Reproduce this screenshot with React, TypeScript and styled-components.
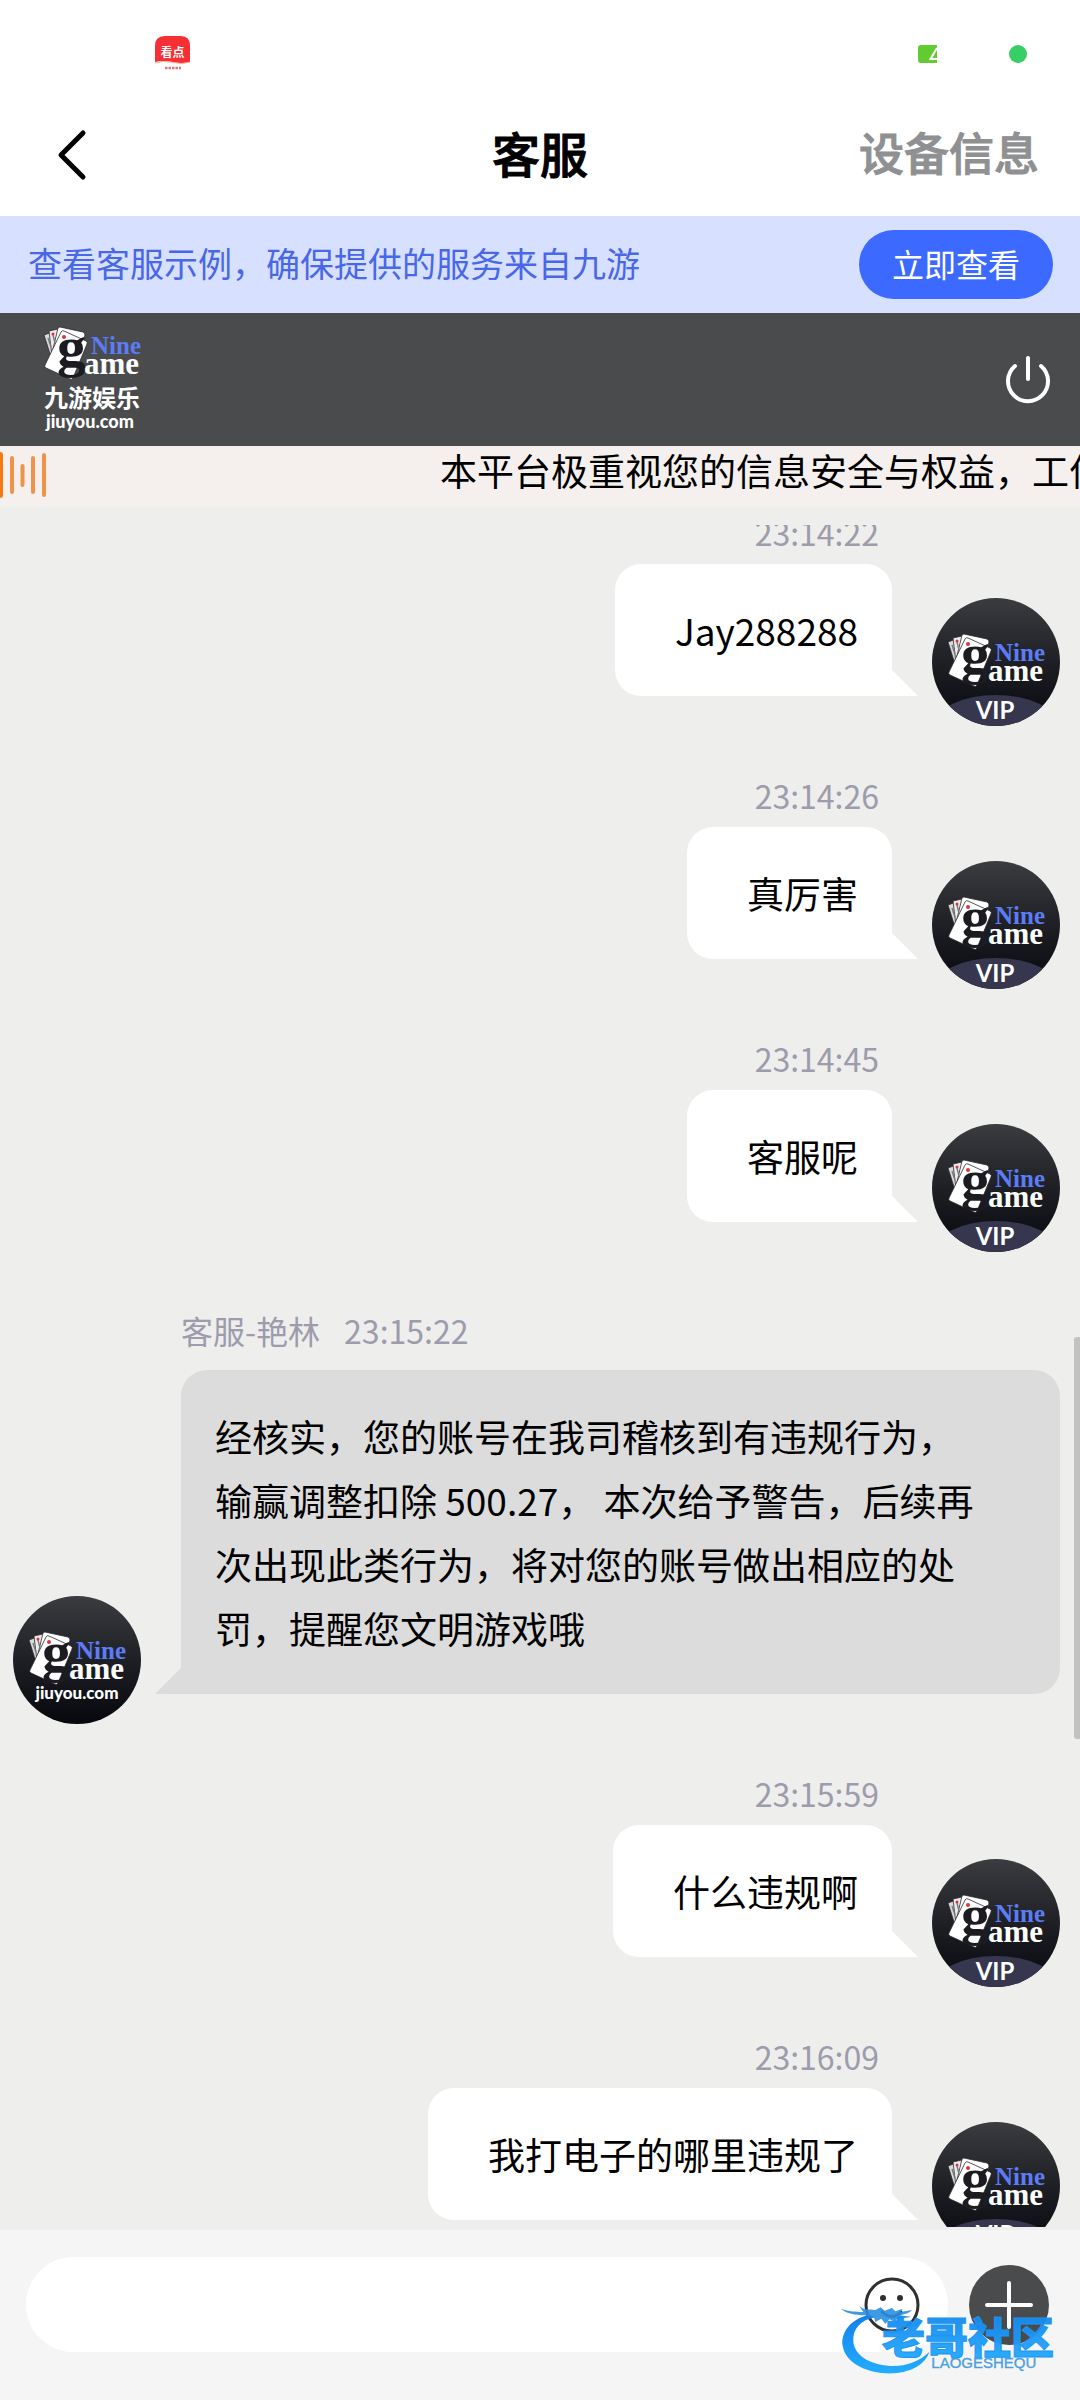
import React, { useLayoutEffect, useRef } from "react";
import styled, { createGlobalStyle } from "styled-components";

const GlobalStyle = createGlobalStyle`
  * { box-sizing: border-box; }
  body {
    margin: 0;
    background: #eeeeec;
    font-family: "Noto Sans CJK SC", "Noto Sans", sans-serif;
    color: #000;
  }
  button, input { font: inherit; color: inherit; }
  button { padding: 0; border: 0; background: none; cursor: pointer; }
  svg { display: block; }
`;

const Page = styled.div`
  position: relative;
  display: flex;
  flex-direction: column;
  height: 100vh;
  overflow: hidden;
`;

const StatusBar = styled.div`
  flex: none;
  display: flex;
  align-items: center;
  justify-content: space-between;
  height: 94px;
  padding: 14px 53px 0 155px;
  background: #fff;
`;

const StatusGroup = styled.div`
  display: flex;
  align-items: center;
  gap: 72px;
`;

const RecordingDot = styled.span`
  width: 18px;
  height: 18px;
  border-radius: 50%;
  background: #35cf66;
`;

const NavBar = styled.header`
  flex: none;
  display: grid;
  grid-template-columns: 1fr auto 1fr;
  align-items: center;
  height: 122px;
  padding: 0 41px 6px;
  background: #fff;
`;

const BackButton = styled.button`
  justify-self: start;
  padding: 6px 14px 0;
`;

const Title = styled.h1`
  margin: 0;
  font-size: 48px;
  line-height: 64px;
  font-weight: 500;
  -webkit-text-stroke: 1px currentColor;
`;

const DeviceButton = styled.button`
  justify-self: end;
  font-size: 45px;
  line-height: 64px;
  font-weight: 500;
  color: #8f9092;
  -webkit-text-stroke: 1px currentColor;
`;

const VerifyBanner = styled.section`
  flex: none;
  display: flex;
  align-items: center;
  justify-content: space-between;
  height: 97px;
  padding: 0 27px 0 28px;
  background: #d8e0ff;
`;

const BannerText = styled.p`
  margin: 0;
  padding-bottom: 4px;
  font-size: 34px;
  line-height: 48px;
  color: #4868e8;
`;

const BannerButton = styled.button`
  height: 69px;
  padding: 0 33px 4px;
  border-radius: 35px;
  background: #3c69ff;
  color: #fff;
  font-size: 32px;
  line-height: 48px;
`;

const BrandBar = styled.section`
  flex: none;
  display: flex;
  align-items: center;
  justify-content: space-between;
  height: 133px;
  padding: 0 28px 0 43px;
  background: #4a4b4c;
`;

const Notice = styled.section`
  flex: none;
  display: flex;
  height: 60px;
  overflow: hidden;
  background: #f5f0ee;
`;

const NoticeIcon = styled.div`
  flex: none;
  padding-top: 6px;
`;

const NoticeText = styled.p`
  flex: 1;
  margin: 0;
  padding-left: 392px;
  overflow: hidden;
  white-space: nowrap;
  font-size: 37px;
  line-height: 48px;
`;

const Chat = styled.main`
  position: relative;
  flex: 1;
  display: flex;
  min-height: 0;
  padding: 19px 0 3px;
`;

const Scroller = styled.div`
  flex: 1;
  overflow-y: auto;
  scrollbar-width: none;
`;

const ScrollThumb = styled.div`
  position: absolute;
  top: 48.2%;
  right: 0;
  width: 6px;
  height: 23.3%;
  border-radius: 3px 0 0 3px;
  background: #c2c2c1;
`;

const Message = styled.article<{ $mine: boolean }>`
  display: grid;
  grid-template-columns: ${(p) => (p.$mine ? "1fr 128px" : "128px 1fr")};
  column-gap: 40px;
  align-items: end;
  justify-items: ${(p) => (p.$mine ? "end" : "stretch")};
  padding: ${(p) => (p.$mine ? "0" : "9px")} 20px 45px 13px;
`;

const Meta = styled.div<{ $mine: boolean }>`
  grid-row: 1;
  grid-column: ${(p) => (p.$mine ? 1 : 2)};
  display: flex;
  gap: 24px;
  margin-bottom: ${(p) => (p.$mine ? "8px" : "16px")};
  padding-right: 13px;
  font-size: 32px;
  line-height: 48px;
  color: #9d9bac;
`;

const Bubble = styled.p<{ $mine: boolean }>`
  position: relative;
  grid-row: 2;
  grid-column: ${(p) => (p.$mine ? 1 : 2)};
  margin: 0 0 30px;
  padding: ${(p) => (p.$mine ? "34px 34px 34px 60px" : "34px 72px 34px 34px")};
  border-radius: ${(p) => (p.$mine ? "26px 26px 0 26px" : "26px 26px 26px 0")};
  background: ${(p) => (p.$mine ? "#fff" : "#dcdcdc")};
  font-size: 37px;
  line-height: 64px;

  &::after {
    content: "";
    position: absolute;
    bottom: 0;
    ${(p) => (p.$mine ? "left: 100%" : "right: 100%")};
    width: 26px;
    height: 26px;
    background: inherit;
    clip-path: ${(p) =>
      p.$mine ? "polygon(0 0, 100% 100%, 0 100%)" : "polygon(100% 0, 100% 100%, 0 100%)"};
  }
`;

const AvatarSlot = styled.div<{ $mine: boolean }>`
  grid-row: 2;
  grid-column: ${(p) => (p.$mine ? 2 : 1)};
`;

const Composer = styled.form`
  flex: none;
  display: flex;
  align-items: center;
  gap: 21px;
  padding: 27px 31px 48px 26px;
  background: #f5f5f5;
`;

const Field = styled.div`
  flex: 1;
  display: flex;
  align-items: center;
  height: 95px;
  padding: 0 28px 0 40px;
  border-radius: 48px;
  background: #fff;
`;

const TextInput = styled.input`
  flex: 1;
  min-width: 0;
  height: 64px;
  border: 0;
  outline: none;
  background: transparent;
  font-size: 37px;
`;

const AddButton = styled.button`
  display: grid;
  place-items: center;
  width: 80px;
  height: 80px;
  border-radius: 50%;
  background: #4a4b4c;
`;

const Watermark = styled.div`
  position: absolute;
  right: 16px;
  bottom: 24px;
  pointer-events: none;
`;

const SERIF = '"Liberation Serif", serif';
const SANS = "Lato, sans-serif";

function BrandMark() {
  return (
    <g>
      <g stroke="#2a2a2e" strokeWidth="0.8" strokeLinejoin="round">
        <path d="M16 44 l8 -3 9 22 -10 3z" fill="#d9d9db" />
        <path d="M21 40 l9 -2 7 24 -13 3z" fill="#ebebed" />
        <path d="M30 37 q1 -1 2 -1 l23 5 q2 1 2 3 l-4 16 -28 -2z" fill="#fff" />
        <path d="M33 41 q1 -2 3 -1 l22 10 q2 1 1 3 l-14 34 q-1 2 -3 1 l-24 -11 q-2 -1 -1 -3z" fill="#fff" />
      </g>
      <path d="M20 47 l3 9 M25 44 l2 8" stroke="#777" strokeWidth="1.4" />
      <circle cx="25" cy="43" r="1.500" fill="#d8363a" />
      <circle cx="36" cy="46" r="2" fill="#d8363a" />
      <text x="29" y="75" fontFamily={SERIF} fontWeight="700" fontSize="58" fill="#1b1b20">g</text>
      <text x="63" y="63" fontFamily={SERIF} fontWeight="700" fontSize="25" fill="#5b7cf5">Nine</text>
      <text x="56" y="83" fontFamily={SERIF} fontWeight="700" fontSize="31" fill="#fff">ame</text>
    </g>
  );
}

function BrandLogo() {
  return (
    <svg width="98" height="110" viewBox="0 0 98 110" role="img" aria-label="九游娱乐">
      <g transform="translate(-15 -34)">
        <BrandMark />
      </g>
      <text x="1" y="82" fontFamily='"Noto Sans CJK SC", sans-serif' fontWeight="700" fontSize="24" fill="#fff">九游娱乐</text>
      <text x="3" y="103" fontFamily={SANS} fontWeight="900" fontSize="18" fill="#fff">jiuyou.com</text>
    </svg>
  );
}

function Avatar({ vip, id }: { vip: boolean; id: string }) {
  return (
    <svg width="128" height="128" viewBox="0 0 128 128" role="img" aria-label={vip ? "VIP" : "客服"}>
      <defs>
        <linearGradient id={`${id}-bg`} x1="0" y1="0" x2="0" y2="1">
          <stop offset="0" stopColor="#3b3c40" />
          <stop offset="0.55" stopColor="#1c1d22" />
          <stop offset="1" stopColor="#07080e" />
        </linearGradient>
        <clipPath id={`${id}-clip`}>
          <circle cx="64" cy="64" r="64" />
        </clipPath>
      </defs>
      <g clipPath={`url(#${id}-clip)`}>
        <rect width="128" height="128" fill={`url(#${id}-bg)`} />
        {vip && <ellipse cx="64" cy="128" rx="62" ry="31" fill="#37364f" />}
      </g>
      <BrandMark />
      {vip ? (
        <text x="63" y="121" textAnchor="middle" fontFamily={SANS} fontWeight="700" fontSize="24" fill="#fff">VIP</text>
      ) : (
        <text x="64" y="103" textAnchor="middle" fontFamily={SANS} fontWeight="900" fontSize="17" fill="#fff">jiuyou.com</text>
      )}
    </svg>
  );
}

function NewsIcon() {
  return (
    <svg width="36" height="36" viewBox="0 0 36 36" role="img" aria-label="看点">
      <path d="M0 10 Q0 0 10 0 H26 Q35 0 35 10 V26 Q27 28 18 26 Q8 24 0 26z" fill="#f52f33" />
      <path d="M0 27 Q8 24 18 26.500 Q27 29 35 26" fill="none" stroke="#f9a08a" strokeWidth="0.8" />
      <text x="17.500" y="21" textAnchor="middle" fontFamily='"Noto Sans CJK SC", sans-serif' fontWeight="700" fontSize="12" fill="#fff">看点</text>
      <path d="M10 32 H26" stroke="#d9777a" strokeWidth="2.500" strokeDasharray="2.500 1" />
    </svg>
  );
}

function NetworkBadge() {
  return (
    <svg width="19" height="18" viewBox="0 0 19 18" aria-hidden="true">
      <path d="M3 0 H19 V18 H3 Q0 18 0 15 V3 Q0 0 3 0z" fill="#62cb31" />
      <path d="M19 3 L12.500 14 H19" fill="none" stroke="#fff" strokeWidth="2" />
    </svg>
  );
}

function WatermarkLogo() {
  return (
    <svg width="224" height="72" viewBox="34 192 672 216" role="img" aria-label="老哥社区">
      <defs>
        <linearGradient id="wm" x1="0" y1="0" x2="0" y2="1">
          <stop offset="0" stopColor="#1380ea" />
          <stop offset="1" stopColor="#22adff" />
        </linearGradient>
      </defs>
      <path
        d="M122 224 C60 238 36 282 42 318 C52 376 130 404 196 400 C250 396 290 372 302 336 C270 366 230 380 184 378 C120 374 76 344 74 304 C72 266 96 240 140 232z"
        fill="url(#wm)"
      />
      <path
        d="M37 206 C62 216 80 214 104 216 L92 198 C108 212 120 206 140 210 L156 202 L168 212 L190 204 L200 214 L222 206 L216 216 L250 210 C240 222 226 222 214 226 L248 230 C226 236 214 232 202 238 L206 250 L182 238 L170 252 L158 236 L140 246 L136 232 L108 226 C80 224 54 222 37 206z"
        fill="#2a8fe2"
        fillOpacity="0.9"
      />
      <text x="160" y="341" fontFamily='"Noto Sans CJK SC", sans-serif' fontWeight="900" fontSize="129" fill="url(#wm)" stroke="#1c96f4" strokeWidth="3" fillOpacity="0.95">老哥社区</text>
      <text x="308" y="384" fontFamily='"Liberation Sans", sans-serif' fontSize="45" fill="#4a9fe0" stroke="#4a9fe0" strokeWidth="1">LAOGESHEQU</text>
    </svg>
  );
}

type ChatMessage = { time: string; text: string; sender?: string };

const messages: ChatMessage[] = [
  { time: "23:14:22", text: "Jay288288" },
  { time: "23:14:26", text: "真厉害" },
  { time: "23:14:45", text: "客服呢" },
  {
    time: "23:15:22",
    sender: "客服-艳林",
    text: "经核实，您的账号在我司稽核到有违规行为，输赢调整扣除 500.27， 本次给予警告，后续再次出现此类行为，将对您的账号做出相应的处罚，提醒您文明游戏哦",
  },
  { time: "23:15:59", text: "什么违规啊" },
  { time: "23:16:09", text: "我打电子的哪里违规了" },
];

const INITIAL_SCROLL = 17;

export default function App() {
  const scroller = useRef<HTMLDivElement>(null);

  useLayoutEffect(() => {
    if (scroller.current) scroller.current.scrollTop = INITIAL_SCROLL;
  }, []);

  return (
    <Page lang="zh-CN">
      <GlobalStyle />
      <StatusBar>
        <NewsIcon />
        <StatusGroup>
          <NetworkBadge />
          <RecordingDot />
        </StatusGroup>
      </StatusBar>

      <NavBar>
        <BackButton type="button" aria-label="返回">
          <svg width="34" height="54" viewBox="0 0 34 54" fill="none" stroke="#000" strokeWidth="5" strokeLinecap="round" strokeLinejoin="round">
            <path d="M28 5 L6 27 L28 49" />
          </svg>
        </BackButton>
        <Title>客服</Title>
        <DeviceButton type="button">设备信息</DeviceButton>
      </NavBar>

      <VerifyBanner>
        <BannerText>查看客服示例，确保提供的服务来自九游</BannerText>
        <BannerButton type="button">立即查看</BannerButton>
      </VerifyBanner>

      <BrandBar>
        <BrandLogo />
        <button type="button" aria-label="退出">
          <svg width="48" height="50" viewBox="0 0 48 50" fill="none" stroke="#fff" strokeWidth="4" strokeLinecap="round">
            <path d="M24 3 V24" />
            <path d="M11 11 A20 20 0 1 0 37 11" />
          </svg>
        </button>
      </BrandBar>

      <Notice>
        <NoticeIcon>
          <svg width="48" height="46" viewBox="0 0 48 46" strokeWidth="4" strokeLinecap="round" aria-hidden="true">
            <path d="M0 3 V43" stroke="#f57a10" strokeWidth="6" />
            <path d="M12 6 V40 M22.500 14 V33 M33 6 V40 M44 3 V43" stroke="#ee9347" />
          </svg>
        </NoticeIcon>
        <NoticeText>本平台极重视您的信息安全与权益，工作</NoticeText>
      </Notice>

      <Chat>
        <Scroller ref={scroller}>
          {messages.map((m, i) => {
            const mine = !m.sender;
            return (
              <Message key={m.time} $mine={mine}>
                <Meta $mine={mine}>
                  {m.sender && <span>{m.sender}</span>}
                  <time>{m.time}</time>
                </Meta>
                <Bubble $mine={mine}>{m.text}</Bubble>
                <AvatarSlot $mine={mine}>
                  <Avatar vip={mine} id={`avatar-${i}`} />
                </AvatarSlot>
              </Message>
            );
          })}
        </Scroller>
        <ScrollThumb />
      </Chat>

      <Composer onSubmit={(e) => e.preventDefault()}>
        <Field>
          <TextInput type="text" aria-label="输入消息" />
          <button type="button" aria-label="表情">
            <svg width="56" height="56" viewBox="0 0 56 56" fill="none" stroke="#303030" strokeWidth="3">
              <circle cx="28" cy="28" r="26" />
              <circle cx="19" cy="21" r="3" fill="#303030" stroke="none" />
              <circle cx="36" cy="21" r="3" fill="#303030" stroke="none" />
              <path d="M18 35 Q28 44 37 35" strokeLinecap="round" />
            </svg>
          </button>
        </Field>
        <AddButton type="button" aria-label="更多">
          <svg width="48" height="48" viewBox="0 0 48 48" stroke="#fff" strokeWidth="4" strokeLinecap="round">
            <path d="M24 2 V46 M2 24 H46" />
          </svg>
        </AddButton>
      </Composer>

      <Watermark>
        <WatermarkLogo />
      </Watermark>
    </Page>
  );
}
